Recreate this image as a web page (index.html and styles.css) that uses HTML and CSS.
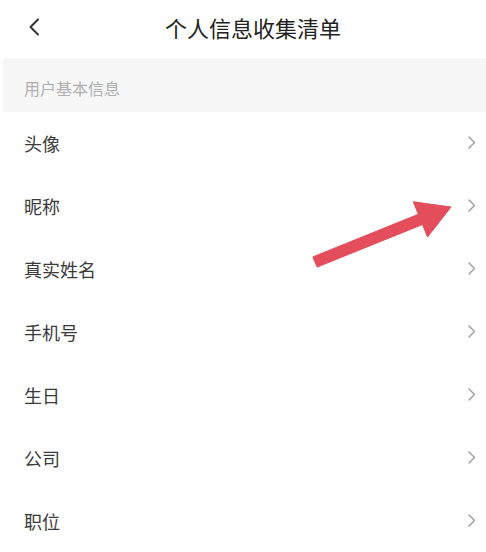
FILE: index.html
```html
<!DOCTYPE html>
<html lang="zh-CN">
<head>
<meta charset="utf-8">
<title>个人信息收集清单</title>
<link rel="stylesheet" href="styles.css">
</head>
<body>
<div class="page">
  <header class="header">
    <div class="back">
      <svg width="12" height="18" viewBox="0 0 12 18"><path d="M10 1.5 L2.5 9 L10 16.5" fill="none" stroke="#333" stroke-width="2" stroke-linecap="round" stroke-linejoin="round"/></svg>
    </div>
    <h1 class="title">个人信息收集清单</h1>
    <div class="spacer"></div>
  </header>
  <div class="section">用户基本信息</div>
  <ul class="list">
    <li class="row"><span>头像</span><svg class="chev" width="8" height="13" viewBox="0 0 8 13"><path d="M1 1 L6.5 6.5 L1 12" fill="none" stroke="#9a9a9a" stroke-width="1.4" stroke-linecap="round" stroke-linejoin="round"/></svg></li>
    <li class="row"><span>昵称</span><svg class="chev" width="8" height="13" viewBox="0 0 8 13"><path d="M1 1 L6.5 6.5 L1 12" fill="none" stroke="#9a9a9a" stroke-width="1.4" stroke-linecap="round" stroke-linejoin="round"/></svg></li>
    <li class="row"><span>真实姓名</span><svg class="chev" width="8" height="13" viewBox="0 0 8 13"><path d="M1 1 L6.5 6.5 L1 12" fill="none" stroke="#9a9a9a" stroke-width="1.4" stroke-linecap="round" stroke-linejoin="round"/></svg></li>
    <li class="row"><span>手机号</span><svg class="chev" width="8" height="13" viewBox="0 0 8 13"><path d="M1 1 L6.5 6.5 L1 12" fill="none" stroke="#9a9a9a" stroke-width="1.4" stroke-linecap="round" stroke-linejoin="round"/></svg></li>
    <li class="row"><span>生日</span><svg class="chev" width="8" height="13" viewBox="0 0 8 13"><path d="M1 1 L6.5 6.5 L1 12" fill="none" stroke="#9a9a9a" stroke-width="1.4" stroke-linecap="round" stroke-linejoin="round"/></svg></li>
    <li class="row"><span>公司</span><svg class="chev" width="8" height="13" viewBox="0 0 8 13"><path d="M1 1 L6.5 6.5 L1 12" fill="none" stroke="#9a9a9a" stroke-width="1.4" stroke-linecap="round" stroke-linejoin="round"/></svg></li>
    <li class="row"><span>职位</span><svg class="chev" width="8" height="13" viewBox="0 0 8 13"><path d="M1 1 L6.5 6.5 L1 12" fill="none" stroke="#9a9a9a" stroke-width="1.4" stroke-linecap="round" stroke-linejoin="round"/></svg></li>
  </ul>
  <svg class="arrow" width="160" height="90" viewBox="0 0 160 90"><polygon points="12.9,71.9 118.3,29.3 113.3,16.8 151,22 127.5,52 122.5,39.5 17.1,82.1" fill="#e34d5c" stroke="#e34d5c" stroke-width="1" stroke-linejoin="round"/></svg>
</div>
</body>
</html>
```

FILE: styles.css
```css
html, body {
  margin: 0;
  padding: 0;
  background: #ffffff;
}
body {
  font-family: "Noto Sans CJK SC", "Noto Sans", sans-serif;
  overflow: hidden;
}
.page {
  position: relative;
  width: 486px;
  height: 552px;
  overflow: hidden;
}
.header {
  display: flex;
  align-items: center;
  height: 58px;
}
.back {
  width: 50px;
  display: flex;
  align-items: center;
  padding-left: 28px;
  box-sizing: border-box;
  height: 58px;
  margin-top: -4px;
}
.title {
  flex: 1;
  margin: 0;
  text-align: center;
  font-size: 22px;
  font-weight: 400;
  color: #222;
  line-height: 1;
  margin-top: -4px;
}
.spacer {
  width: 30px;
}
.section {
  margin-left: 3px;
  height: 54px;
  box-sizing: border-box;
  padding-top: 6px;
  background: #f7f7f8;
  display: flex;
  align-items: center;
  padding-left: 21px;
  font-size: 16px;
  color: #b0b0b0;
}
.list {
  list-style: none;
  margin: 0;
  padding: 0;
}
.row {
  height: 63px;
  display: flex;
  align-items: center;
  justify-content: space-between;
  padding: 0 10px 0 24px;
  font-size: 18px;
  color: #3a3a3a;
}
.row span {
  margin-top: -1px;
}
.chev {
  margin-top: -3px;
}
.arrow {
  position: absolute;
  left: 300px;
  top: 185px;
}
```
